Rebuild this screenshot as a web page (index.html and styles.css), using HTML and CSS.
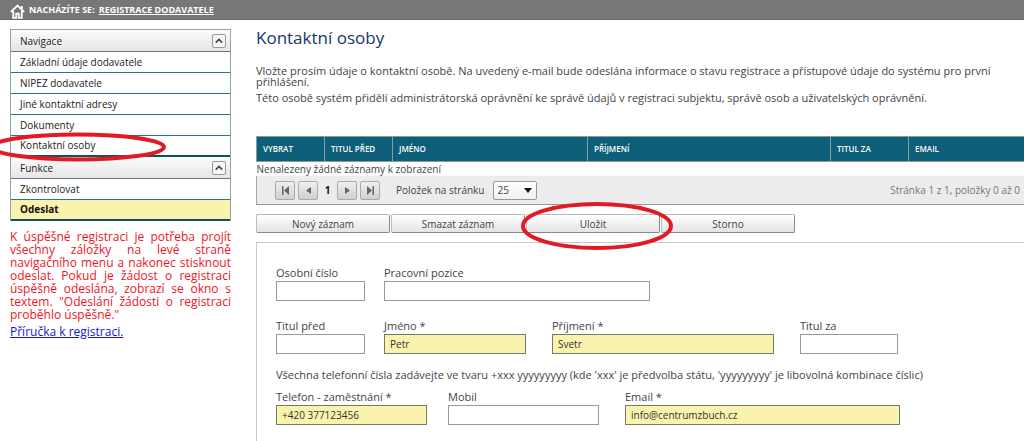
FILE: index.html
```html
<!DOCTYPE html>
<html lang="cs">
<head>
<meta charset="utf-8">
<title>Registrace dodavatele</title>
<link rel="stylesheet" href="styles.css">
</head>
<body>
<header class="topbar">
  <svg class="home" viewBox="0 0 14 14" aria-hidden="true"><path d="M.8 7.300 7 1.500l6.200 5.800M3 6.500V13h2.800V9h2.400v4H11V6.500M11 4.600V1.800" fill="none" stroke="#fff" stroke-width="1.700"/></svg>
  <span>NACHÁZÍTE SE:</span>
  <a href="#">REGISTRACE DODAVATELE</a>
</header>
<div class="layout">
  <aside class="sidebar">
    <nav class="menu">
      <div class="menu-head"><span>Navigace</span><button type="button" class="toggle" aria-label="Sbalit navigaci"><svg viewBox="0 0 13 13"><path d="M3 8.2 6.5 4.8 10 8.2" fill="none" stroke="#444" stroke-width="1.7"/></svg></button></div>
      <a href="#">Základní údaje dodavatele</a>
      <a href="#">NIPEZ dodavatele</a>
      <a href="#">Jiné kontaktní adresy</a>
      <a href="#">Dokumenty</a>
      <a href="#" class="last marked">Kontaktní osoby<svg class="ring ring-nav" viewBox="0 0 178 30" aria-hidden="true"><ellipse cx="89" cy="15" rx="86" ry="12.5" fill="none" stroke="#e01b24" stroke-width="4"/></svg></a>
      <div class="menu-head"><span>Funkce</span><button type="button" class="toggle" aria-label="Sbalit funkce"><svg viewBox="0 0 13 13"><path d="M3 8.2 6.5 4.8 10 8.2" fill="none" stroke="#444" stroke-width="1.7"/></svg></button></div>
      <a href="#">Zkontrolovat</a>
      <a href="#" class="last send">Odeslat</a>
    </nav>
    <p class="warning">K úspěšné registraci je potřeba projít všechny záložky na levé straně navigačního menu a nakonec stisknout odeslat. Pokud je žádost o registraci úspěšně odeslána, zobrazí se okno s textem. "Odeslání žádosti o registraci proběhlo úspěšně."</p>
    <a href="#" class="guide">Příručka k registraci.</a>
  </aside>
  <main class="content">
    <h1>Kontaktní osoby</h1>
    <div class="intro">
      <p>Vložte prosím údaje o kontaktní osobě. Na uvedený e-mail bude odeslána informace o stavu registrace a přístupové údaje do systému pro první přihlášení.</p>
      <p>Této osobě systém přidělí administrátorská oprávnění ke správě údajů v registraci subjektu, správě osob a uživatelských oprávnění.</p>
    </div>
    <table class="grid">
      <colgroup><col class="c-pick"><col class="c-pick"><col class="c-first"><col class="c-sur"><col class="c-after"><col></colgroup>
      <thead><tr><th>VYBRAT</th><th>TITUL PŘED</th><th>JMÉNO</th><th>PŘÍJMENÍ</th><th>TITUL ZA</th><th>EMAIL</th></tr></thead>
      <tbody><tr><td colspan="6">Nenalezeny žádné záznamy k zobrazení</td></tr></tbody>
    </table>
    <div class="pager">
      <div class="pages">
        <button type="button" aria-label="První"><svg viewBox="0 0 9 9"><path d="M1 0h1.5v9H1zM8 0v9L3 4.500z"/></svg></button>
        <button type="button" aria-label="Předchozí"><svg viewBox="0 0 9 9"><path d="M7 1v7L2 4.500z"/></svg></button>
        <b>1</b>
        <button type="button" aria-label="Další"><svg viewBox="0 0 9 9"><path d="M2 1v7l5-3.500z"/></svg></button>
        <button type="button" aria-label="Poslední"><svg viewBox="0 0 9 9"><path d="M6.500 0H8v9H6.500zM1 0v9l5-4.500z"/></svg></button>
      </div>
      <label for="size">Položek na stránku</label>
      <span class="select"><select id="size"><option>25</option></select><svg viewBox="0 0 8 5" aria-hidden="true"><path d="M0 0h8L4 5z" fill="#111"/></svg></span>
      <span class="status">Stránka 1 z 1, položky 0 až 0</span>
    </div>
    <div class="actions">
      <button type="button">Nový záznam</button>
      <button type="button">Smazat záznam</button>
      <span class="marked"><button type="button">Uložit</button><svg class="ring ring-save" viewBox="0 0 154 50" aria-hidden="true"><ellipse cx="77" cy="25" rx="74" ry="22" fill="none" stroke="#e01b24" stroke-width="4"/></svg></span>
      <button type="button">Storno</button>
    </div>
    <form class="panel">
      <div class="row names">
        <div class="field"><label for="num">Osobní číslo</label><input id="num" type="text"></div>
        <div class="field wide"><label for="pos">Pracovní pozice</label><input id="pos" type="text"></div>
      </div>
      <div class="row names second">
        <div class="field"><label for="tb">Titul před</label><input id="tb" type="text"></div>
        <div class="field"><label for="fn">Jméno *</label><input id="fn" class="req" type="text" value="Petr"></div>
        <div class="field"><label for="sn">Příjmení *</label><input id="sn" class="req" type="text" value="Svetr"></div>
        <div class="field"><label for="ta">Titul za</label><input id="ta" type="text"></div>
      </div>
      <p class="hint">Všechna telefonní čísla zadávejte ve tvaru +xxx yyyyyyyyy (kde 'xxx' je předvolba státu, 'yyyyyyyyy' je libovolná kombinace číslic)</p>
      <div class="row phones">
        <div class="field"><label for="tel">Telefon - zaměstnání *</label><input id="tel" class="req" type="text" value="+420 377123456"></div>
        <div class="field"><label for="mob">Mobil</label><input id="mob" type="text"></div>
        <div class="field"><label for="em">Email *</label><input id="em" class="req" type="text" value="info@centrumzbuch.cz"></div>
      </div>
    </form>
  </main>
</div>
</body>
</html>
```
FILE: styles.css
```css
* { box-sizing: border-box; }
body { margin: 0; background: #fff; color: #444; font: 11px/16px "Open Sans", "Noto Sans", sans-serif; overflow-x: hidden; }
button, input, select { font: inherit; color: inherit; margin: 0; }
p { margin: 0; }
.topbar { display: flex; align-items: center; gap: 4px; height: 20px; padding-left: 10px; background: #777; border-bottom: 1px solid #6c6c6c; color: #fff; font-size: 9px; font-weight: 700; }
.topbar a { color: #fff; }
.home { width: 15px; height: 15px; margin-top: 3px; }
.layout { display: flex; padding: 9px 0 0 10px; }
.sidebar { flex: 0 0 221px; margin-right: 25px; }
.menu { border: 1px solid #8fa5ad; border-bottom: 0; color: #222; font-size: 10px; }
.menu > a { display: block; height: 21px; padding-left: 9px; line-height: 20px; color: inherit; text-decoration: none; border-bottom: 1px solid #2d7486; }
.menu > a.last { border-bottom: 2px solid #14505f; line-height: 19px; }
.menu > a.send { background: #faf3ae; font-weight: 700; color: #111; }
.menu-head { display: flex; align-items: center; justify-content: space-between; height: 22px; padding: 0 4px 0 9px; background: linear-gradient(#fbfbfb, #e6e6e6); border-bottom: 1px solid #66777d; }
.toggle { display: flex; width: 14px; height: 14px; padding: 0; border: 1px solid #999; border-radius: 2px; background: #f5f5f5; }
.toggle svg { width: 12px; height: 12px; }
.marked { position: relative; }
.ring { position: absolute; pointer-events: none; z-index: 2; }
.ring-nav { width: 178px; height: 30px; left: -22px; top: -4px; }
.ring-save { width: 154px; height: 50px; left: -6px; top: -13px; }
.warning { margin-top: 9px; color: #f0141e; font-size: 12px; line-height: 13px; text-align: justify; }
.guide { display: inline-block; margin-top: 3px; color: #1414d8; font-size: 12px; }
.content { flex: 1; min-width: 0; }
h1 { margin: 0; color: #17376b; font-size: 17px; line-height: 18px; font-weight: 400; }
.intro { padding: 18px 8px 0 0; line-height: 11px; }
.intro p + p { margin-top: 5px; }
.grid { width: 100%; margin-top: 33px; border-collapse: collapse; table-layout: fixed; }
.grid th { height: 25px; padding: 0 6px; text-align: left; font-size: 8px; line-height: 12px; font-weight: 600; color: #fff; background: #0d5e78; border: 1px solid #8a9a9f; }
.grid td { height: 14px; padding: 0; font-size: 10px; line-height: 14px; }
.grid th:last-child { border-right: 0; }
.c-pick { width: 68px; } .c-first { width: 195px; } .c-sur { width: 243px; } .c-after { width: 78px; }
.pager { display: flex; align-items: center; height: 29px; padding: 0 4px 0 18px; background: #ececec; border-left: 1px solid #aaa; border-bottom: 1px solid #999; font-size: 10px; }
.pages { display: flex; align-items: center; gap: 3px; margin-right: 16px; }
.pages b { width: 13px; text-align: center; color: #111; }
.pages button { display: flex; align-items: center; justify-content: center; width: 20px; height: 19px; padding: 0; border: 1px solid #aaa; border-radius: 2px; background: linear-gradient(#f0f0f0, #d0d0d0); }
.pages svg { width: 9px; height: 9px; fill: #666; }
.select { position: relative; margin-left: 8px; }
.select select { display: block; width: 44px; height: 19px; padding: 0 4px; border: 1px solid #999; border-radius: 2px; appearance: none; background: linear-gradient(#fff, #f0f0f0); }
.select svg { position: absolute; right: 5px; top: 7px; width: 8px; height: 5px; pointer-events: none; }
.status { margin-left: auto; color: #777; white-space: nowrap; }
.actions { display: flex; gap: 1px; margin-top: 9px; }
.actions > * { flex: 0 1 134px; height: 19px; }
.actions button { display: block; width: 100%; height: 19px; padding: 0; font-size: 10px; line-height: 16px; border: 1px solid #bbb; border-right-color: #888; border-bottom-color: #888; border-radius: 2px; background: linear-gradient(#fff, #e4e4e4); }
.panel { margin-top: 9px; padding: 22px 20px 17px 19px; border: 1px solid #c8c8c8; border-right: 0; }
.row { display: grid; }
.names { grid-template-columns: 108px 168px 248px 98px; }
.names .field:nth-child(1) { padding-right: 19px; }
.names .field:nth-child(2), .names .field:nth-child(3) { padding-right: 26px; }
.names .field.wide { grid-column: 2 / 4; padding-right: 150px; }
.second { margin-top: 17px; }
.phones { grid-template-columns: 172px 177px 275px; }
.phones .field:nth-child(1) { padding-right: 21px; }
.phones .field:nth-child(2) { padding-right: 26px; }
.field label { display: block; }
.field input { display: block; width: 100%; height: 20px; padding: 0 5px; border: 1px solid #999; border-radius: 0; background: #fff; font-size: 10px; }
.field input.req { background: #faf3ae; border-color: #77776a; color: #333; }
.hint { margin: 13px 0 6px; }
```
